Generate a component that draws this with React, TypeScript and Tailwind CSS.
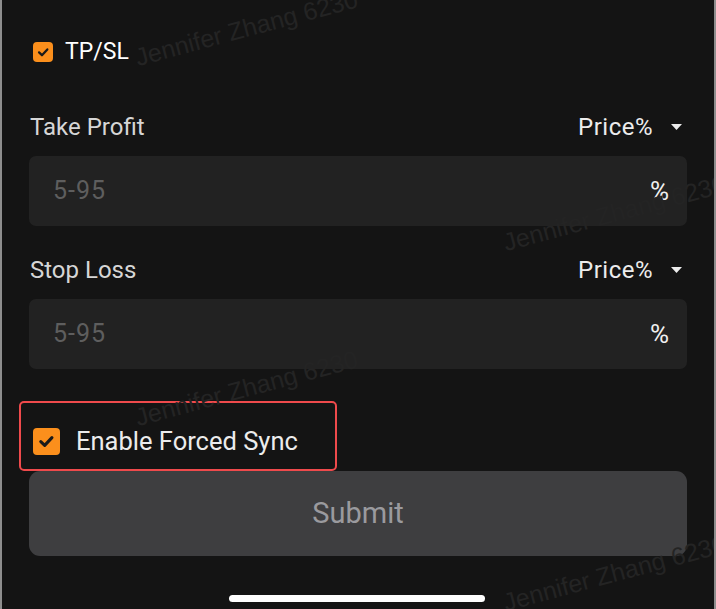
const font = { fontFamily: "Roboto, 'Noto Sans', sans-serif" };

function Check({ size }: { size: number }) {
  return (
    <span
      className="flex items-center justify-center rounded-[4px] bg-[#fb8f1c] shrink-0"
      style={{ width: size, height: size }}
    >
      <svg width={size * 0.62} height={size * 0.62} viewBox="0 0 12 12" fill="none">
        <path d="M2 6.2 L4.8 8.9 L10 3.3" stroke="#1a1a1a" strokeWidth="2.2" strokeLinecap="round" strokeLinejoin="round" />
      </svg>
    </span>
  );
}

function Field({ label }: { label: string }) {
  return (
    <>
      <div className="flex items-center justify-between h-[28px] pl-[1px] pr-[5px]">
        <span className="text-[24px] text-[#d6d6d6]">{label}</span>
        <div className="flex items-center gap-[18px]">
          <span className="text-[24px] tracking-[0.5px] text-[#ececec]">Price%</span>
          <svg width="11" height="6" viewBox="0 0 11 6">
            <path d="M0 0 H11 L5.5 6 Z" fill="#ececec" />
          </svg>
        </div>
      </div>
      <div className="mt-[15px] h-[70px] rounded-[7px] bg-[#222222] flex items-center justify-between pl-[24px] pr-[18px]">
        <span className="text-[25px] tracking-[1px] text-[#5e5e5e]">5-95</span>
        <span className="text-[26px] text-[#f0f0f0]">%</span>
      </div>
    </>
  );
}

const marks = [
  [137, 70],
  [137, 430],
  [505, 255],
  [505, 615],
  [-231, 255],
  [-231, 615],
];

export default function App() {
  return (
    <div
      className="relative w-[716px] h-[609px] overflow-hidden bg-[#141414] border-l-2 border-r-2 border-[#8e8e8e]"
      style={font}
    >
      <div className="px-[27px] pt-[38px]">
        <div className="flex items-center h-[28px] pl-[4px] gap-[12px]">
          <Check size={20} />
          <span className="text-[23px] text-white">TP/SL</span>
        </div>

        <div className="mt-[47px]">
          <Field label="Take Profit" />
        </div>
        <div className="mt-[30px]">
          <Field label="Stop Loss" />
        </div>

        <div className="mt-[32px] -ml-[10px] w-[318px] h-[70px] rounded-[5px] border-2 border-[#ef4a4c] flex items-center pt-[10px] pl-[12px] gap-[16px]">
          <Check size={27} />
          <span className="text-[25.5px] text-[#ececec]">Enable Forced Sync</span>
        </div>

        <button className="w-full h-[85px] rounded-[11px] bg-[#3e3e40] text-[29px] text-[#9a9a9e]">
          Submit
        </button>

        <div className="mt-[39px] flex justify-center">
          <div className="w-[256px] h-[7px] rounded-full bg-white ml-[-2px]" />
        </div>
      </div>

      <div className="pointer-events-none absolute inset-0">
        {marks.map(([x, y], i) => (
          <span
            key={i}
            className="absolute whitespace-nowrap text-[25px] leading-none text-[#242424] origin-bottom-left -rotate-[15deg]"
            style={{ left: x, top: y - 25, fontFamily: "'Liberation Sans', Arial, sans-serif" }}
          >
            Jennifer Zhang 6230
          </span>
        ))}
      </div>
    </div>
  );
}
